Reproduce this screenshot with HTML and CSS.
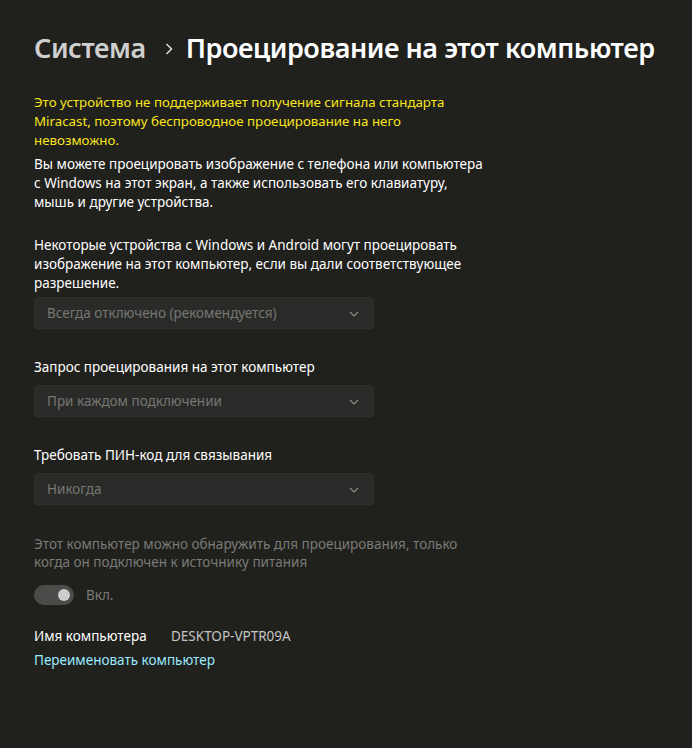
FILE: index.html
```html
<!DOCTYPE html>
<html lang="ru">
<head>
  <meta charset="UTF-8" />
  <title>Проецирование на этот компьютер</title>
  <link rel="stylesheet" href="styles.css">
</head>
<body>

<div class="page">
  <h1 class="crumbs">
    <span class="crumb-parent">Система</span>
    <svg class="crumb-sep" width="10" height="14" viewBox="0 0 10 14"><path d="M2.5 2 L7.5 7 L2.5 12" fill="none" stroke="#d8d8d8" stroke-width="1.6"/></svg>
    <span class="crumb-current">Проецирование на этот компьютер</span>
  </h1>

  <p class="warn">Это устройство не поддерживает получение сигнала стандарта Miracast, поэтому беспроводное проецирование на него невозможно.</p>

  <p class="text intro">Вы можете проецировать изображение с телефона или компьютера с Windows на этот экран, а также использовать его клавиатуру, мышь и другие устройства.</p>

  <p class="text para">Некоторые устройства с Windows и Android могут проецировать изображение на этот компьютер, если вы дали соответствующее разрешение.</p>
  <div class="select first">
    <span>Всегда отключено (рекомендуется)</span>
    <svg class="chev" width="10" height="6" viewBox="0 0 10 6"><path d="M1 1 L5 5 L9 1" fill="none" stroke="#8a8a86" stroke-width="1.2"/></svg>
  </div>

  <p class="text label">Запрос проецирования на этот компьютер</p>
  <div class="select">
    <span>При каждом подключении</span>
    <svg class="chev" width="10" height="6" viewBox="0 0 10 6"><path d="M1 1 L5 5 L9 1" fill="none" stroke="#8a8a86" stroke-width="1.2"/></svg>
  </div>

  <p class="text label">Требовать ПИН-код для связывания</p>
  <div class="select">
    <span>Никогда</span>
    <svg class="chev" width="10" height="6" viewBox="0 0 10 6"><path d="M1 1 L5 5 L9 1" fill="none" stroke="#8a8a86" stroke-width="1.2"/></svg>
  </div>

  <p class="text muted">Этот компьютер можно обнаружить для проецирования, только когда он подключен к источнику питания</p>

  <div class="toggle-row">
    <div class="toggle"><div class="knob"></div></div>
    <span class="toggle-label">Вкл.</span>
  </div>

  <div class="name-row">
    <span class="name-key">Имя компьютера</span>
    <span class="name-val">DESKTOP-VPTR09A</span>
  </div>

  <a class="link" href="#">Переименовать компьютер</a>
</div>

</body>
</html>
```

FILE: styles.css
```css
body { margin: 0; background: #20201d; font-family: "Noto Sans", "Open Sans", sans-serif; color: #ffffff; }
.page { padding: 28px 34px 0; }

.crumbs { display: flex; align-items: center; margin: 0; font-size: 27px; font-weight: 600; line-height: 40px; letter-spacing: -0.45px; white-space: nowrap; }
.crumb-parent { color: #cfcfcf; }
.crumb-sep { flex-shrink: 0; margin: 2px 12px 0 18px; }
.crumb-current { color: #ffffff; }

p { margin: 0; }
.text, .warn { font-size: 13.5px; line-height: 19px; max-width: 455px; }
.warn { color: #f9e51c; margin-top: 25px; font-size: 13.3px; }
.intro { margin-top: 5px; }
.para { margin-top: 24px; }
.label { margin-top: 29px; }

.select { display: flex; align-items: center; justify-content: space-between; box-sizing: border-box; width: 340px; height: 32px; margin-top: 8px; padding: 0 14px 0 12px; background: #2a2b28; border: 1px solid #30312d; border-radius: 4px; color: #767673; font-size: 13.5px; }
.select.first { margin-top: 4px; }
.chev { margin-top: 1px; }

.muted { color: #7a7a77; margin-top: 30px; line-height: 18px; }

.toggle-row { display: flex; align-items: center; gap: 12px; margin-top: 14px; }
.toggle { display: flex; align-items: center; justify-content: flex-end; box-sizing: border-box; width: 40px; height: 20px; padding-right: 4px; border-radius: 10px; background: #4b4b49; }
.knob { width: 12px; height: 12px; border-radius: 50%; background: #cdcdcd; }
.toggle-label { color: #7a7a77; font-size: 13.5px; }

.name-row { display: flex; margin-top: 22px; font-size: 13.5px; line-height: 19px; }
.name-key { width: 137px; color: #ffffff; }
.name-val { color: #c4c4c2; }

.link { display: block; margin-top: 5px; color: #99ebff; font-size: 13.5px; line-height: 19px; text-decoration: none; }
```
